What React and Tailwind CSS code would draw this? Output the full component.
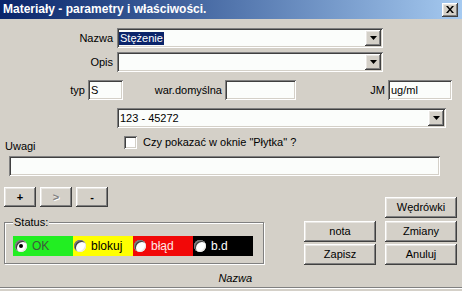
import React from 'react';

// Classic Windows dialog: "Materiały - parametry i właściwości."

const RAISED =
  'bg-[#d4d0c8] shadow-[inset_-1px_-1px_#404040,inset_1px_1px_#ffffff,inset_-2px_-2px_#808080,inset_2px_2px_#e8e6e2]';
const SUNKEN =
  'bg-[#fbfdfb] shadow-[inset_1px_1px_#808080,inset_-1px_-1px_#ffffff,inset_2px_2px_#404040,inset_-2px_-2px_#d4d0c8]';

function Arrow() {
  return (
    <div className={`${RAISED} w-[16px] h-[16px] flex items-center justify-center`}>
      <svg width="7" height="4" viewBox="0 0 7 4">
        <path d="M0 0h7L3.5 4z" fill="#000" />
      </svg>
    </div>
  );
}

function Combo({ width, children }) {
  return (
    <div className={`${SUNKEN} h-[20px] flex items-center pl-[2px] pr-[2px]`} style={{ width }}>
      <div className="flex-1 flex items-center overflow-hidden">{children}</div>
      <Arrow />
    </div>
  );
}

function Field({ width, children }) {
  return (
    <div className={`${SUNKEN} h-[20px] flex items-center pl-[3px]`} style={{ width }}>
      {children}
    </div>
  );
}

function Button({ children, className = '' }) {
  return (
    <div className={`${RAISED} w-[72px] h-[21px] flex items-center justify-center ${className}`}>
      {children}
    </div>
  );
}

function Radio({ checked }) {
  return (
    <div className="w-[12px] h-[12px] rounded-full bg-white shadow-[inset_1px_1px_#808080,inset_-1px_-1px_#e8e6e2,inset_2px_2px_#404040] flex items-center justify-center shrink-0">
      {checked && <div className="w-[4px] h-[4px] rounded-full bg-black" />}
    </div>
  );
}

const STATUS = [
  { label: 'OK', bg: 'bg-[#22ee22]', text: 'text-[#3c5a3c]', checked: true, pad: 'pl-[2px]' },
  { label: 'blokuj', bg: 'bg-[#ffff00]', text: 'text-black', pad: 'pl-[1px]' },
  { label: 'błąd', bg: 'bg-[#f20808]', text: 'text-[#ffe8e8]', pad: 'pl-[1px]' },
  { label: 'b.d', bg: 'bg-black', text: 'text-white', pad: 'pl-[1px]' },
];

export default function App() {
  return (
    <div className="w-[462px] h-[291px] overflow-hidden bg-[#d4d0c8] text-black text-[11px] leading-[13px] font-['Liberation_Sans',Arial,sans-serif] flex flex-col">
      {/* pasek tytułu */}
      <div className="h-[19px] shrink-0 bg-gradient-to-r from-[#0a246a] to-[#a6caf0] flex items-center justify-between pl-[3px] pr-[4px]">
        <span className="text-white font-bold text-[12px]">Materiały - parametry i właściwości.</span>
        <div className={`${RAISED} w-[16px] h-[14px] flex items-center justify-center`}>
          <svg width="8" height="7" viewBox="0 0 8 7">
            <path d="M0 0h2l2 2.5L6 0h2L5 3.5 8 7H6L4 4.5 2 7H0l3-3.5z" fill="#000" />
          </svg>
        </div>
      </div>

      {/* Nazwa */}
      <div className="flex items-center mt-[9px]">
        <span className="w-[113px] text-right">Nazwa</span>
        <div className="ml-[4px]">
          <Combo width={266}>
            <span className="bg-[#0a246a] text-white px-[1px]">Stężenie</span>
          </Combo>
        </div>
      </div>

      {/* Opis */}
      <div className="flex items-center mt-[4px]">
        <span className="w-[113px] text-right">Opis</span>
        <div className="ml-[4px]">
          <Combo width={266} />
        </div>
      </div>

      {/* typ / war.domyślna / JM */}
      <div className="flex items-center mt-[8px]">
        <span className="w-[85px] text-right">typ</span>
        <div className="ml-[3px]">
          <Field width={35}>S</Field>
        </div>
        <span className="w-[99px] text-right">war.domyślna</span>
        <div className="ml-[3px]">
          <Field width={71} />
        </div>
        <span className="w-[89px] text-right">JM</span>
        <div className="ml-[3px]">
          <Field width={64}>ug/ml</Field>
        </div>
      </div>

      {/* kod */}
      <div className="ml-[117px] mt-[8px]">
        <Combo width={329}>
          <span className="pl-[1px]">123 - 45272</span>
        </Combo>
      </div>

      {/* checkbox + Uwagi */}
      <div className="flex h-[28px]">
        <span className="w-[124px] pl-[5px] self-end pb-[3px]">Uwagi</span>
        <div className="flex items-center self-start mt-[8px] gap-[6px]">
          <div className={`${SUNKEN} w-[13px] h-[13px] bg-white`} />
          <span>Czy pokazać w oknie "Płytka" ?</span>
        </div>
      </div>
      <div className="ml-[9px]">
        <Field width={431} />
      </div>

      {/* dolna część */}
      <div className="flex mt-[11px]">
        <div className="ml-[4px] w-[260px] flex flex-col">
          <div className="flex gap-[4px]">
            <div className={`${RAISED} w-[32px] h-[20px] flex items-center justify-center font-bold`}>+</div>
            <div className={`${RAISED} w-[32px] h-[20px] flex items-center justify-center font-bold text-[#808080] [text-shadow:1px_1px_0_#ffffff]`}>&gt;</div>
            <div className={`${RAISED} w-[32px] h-[20px] flex items-center justify-center font-bold`}>-</div>
          </div>

          <div className="relative mt-[15px] h-[42px] border border-[#808080] shadow-[inset_1px_1px_#ffffff,1px_1px_#ffffff] pt-[13px] pl-[8px]">
            <span className="absolute -top-[7px] left-[8px] bg-[#d4d0c8] px-[1px]">Status:</span>
            <div className="flex">
              {STATUS.map((s) => (
                <div key={s.label} className={`w-[60px] h-[20px] flex items-center gap-[5px] ${s.bg} ${s.pad}`}>
                  <Radio checked={s.checked} />
                  <span className={`${s.text} text-[12px]`}>{s.label}</span>
                </div>
              ))}
            </div>
          </div>

          <div className="w-[248px] text-right italic mt-[8px]">Nazwa</div>
        </div>

        <div className="ml-[40px] mt-[34px] flex flex-col gap-[2px]">
          <Button>nota</Button>
          <Button>Zapisz</Button>
        </div>

        <div className="ml-[9px] mt-[10px] flex flex-col gap-[2px]">
          <Button className="mb-[1px]">Wędrówki</Button>
          <Button>Zmiany</Button>
          <Button>Anuluj</Button>
        </div>
      </div>

      {/* separator paska stanu */}
      <div className="mt-auto mb-[2px] h-[2px] border-t border-[#808080] border-b border-b-white" />
    </div>
  );
}
